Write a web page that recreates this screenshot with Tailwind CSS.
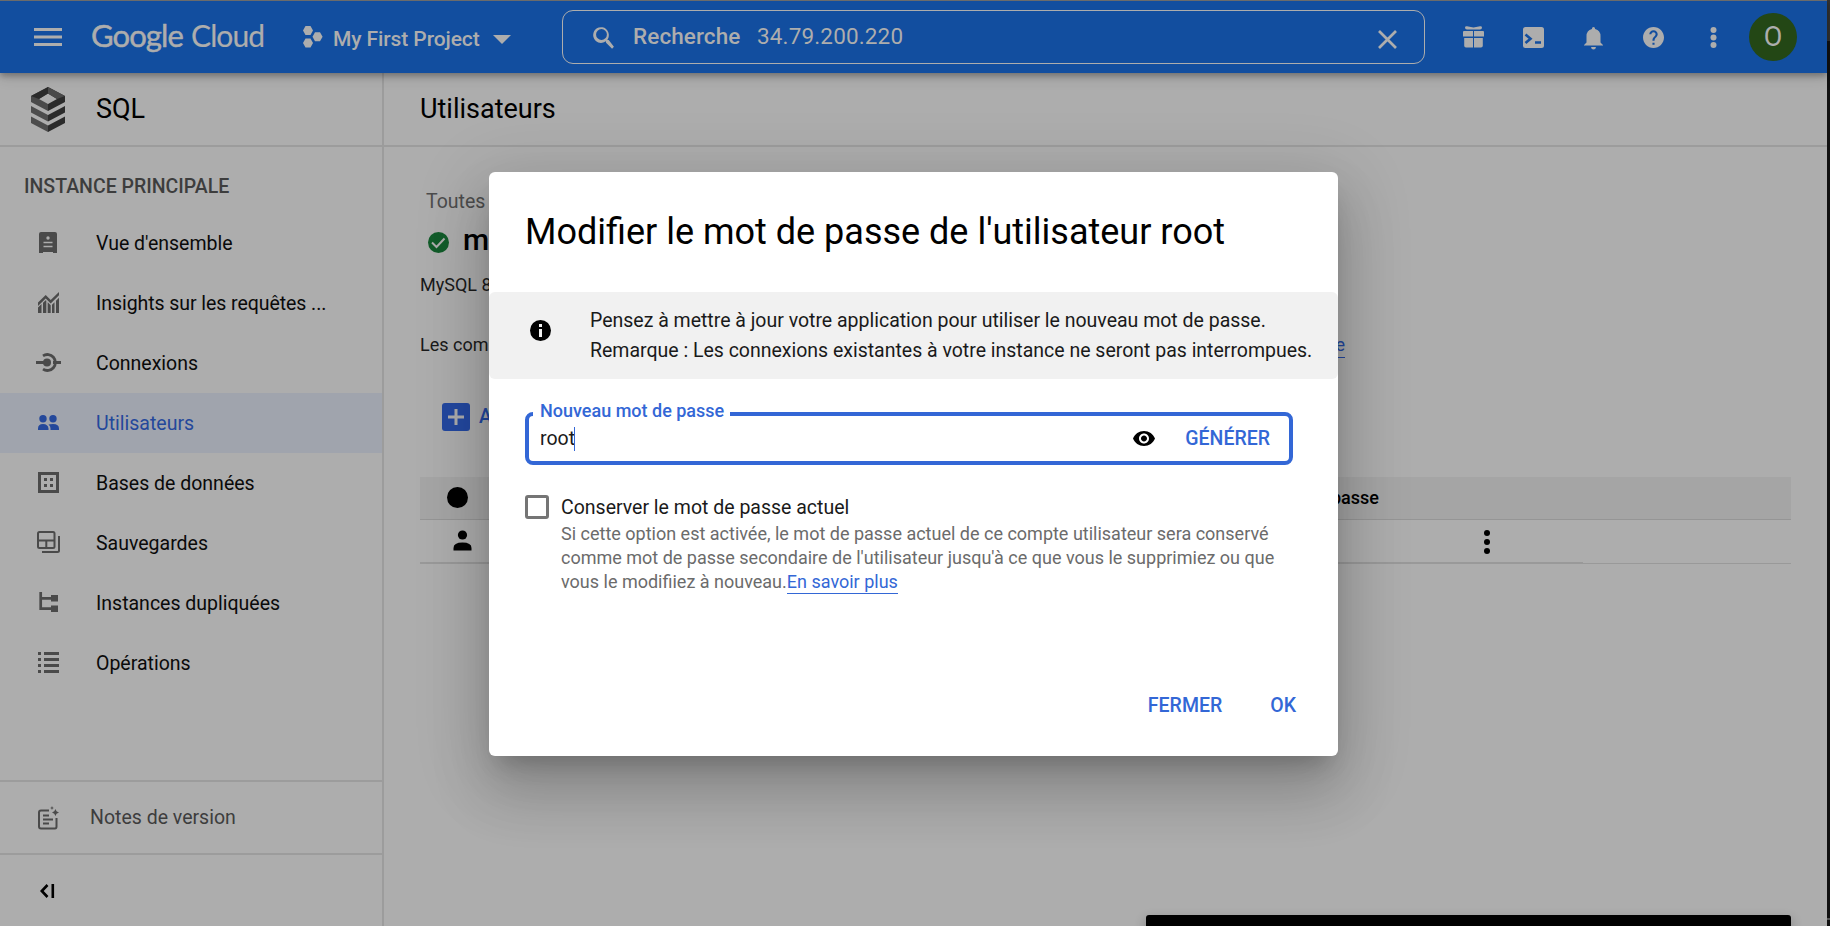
<!DOCTYPE html>
<html lang="fr">
<head>
<meta charset="utf-8">
<title>SQL – Utilisateurs</title>
<script src="https://cdn.jsdelivr.net/npm/@tailwindcss/browser@4"></script>
</head>
<body class="relative w-[1830px] h-[926px] overflow-hidden bg-[#adadad] font-[Roboto,sans-serif] text-black text-[19.5px]">
<div class="flex h-[926px] overflow-hidden">
 <div class="flex w-[1827px] flex-col">
  <header class="relative z-10 flex h-[73px] shrink-0 items-center border-t border-[#6b6b6b] bg-[#124e9f] text-[#adadad] shadow-[0_3px_6px_rgba(0,0,0,0.28),0_4px_14px_rgba(0,0,0,0.12)]">
   <svg class="ml-[34px] w-7 h-[18px] shrink-0" viewBox="0 0 28 18" fill="currentColor"><path d="M0 0h28v3H0zM0 7.5h28v3H0zM0 15h28v3H0z"/></svg>
   <div class="ml-[29px] mb-1 flex w-[175px] shrink-0 items-baseline gap-[6px] whitespace-nowrap font-[Lato,sans-serif] text-[31px] leading-[40px]"><span class="w-[94px] tracking-[-0.9px] [-webkit-text-stroke:0.5px_currentColor]">Google</span><span class="text-[30px] tracking-[-0.9px] [-webkit-text-stroke:0.2px_currentColor]">Cloud</span></div>
   <svg class="ml-[37px] w-5 h-[22px] shrink-0" viewBox="0 0 20 22" fill="currentColor"><path d="M2.5 0h5l2.500 4.500-2.500 4.500h-5L0 4.500zM2.500 12.500h5l2.500 4.500-2.500 4.500h-5L0 17zM12 6.300h5l2.600 4.500-2.600 4.500h-5l-2.500-4.500z"/></svg>
   <span class="ml-[10px] mt-[5px] w-[148px] shrink-0 whitespace-nowrap text-[21px] font-medium tracking-[-0.1px]">My First Project</span>
   <svg class="ml-[12px] mt-1 w-[18px] h-[9px] shrink-0" viewBox="0 0 18 9" fill="currentColor"><path d="M0 0h18L9 9z"/></svg>
   <div class="ml-[51px] flex h-[54px] w-[863px] shrink-0 items-center rounded-[11px] border border-[#adadad]">
    <svg class="ml-[27px] w-[29px] h-[29px]" viewBox="0 0 24 24" fill="currentColor"><path d="M15.500 14h-.79l-.28-.27A6.500 6.500 0 1 0 13 15.200l.27.28v.79l5 4.990L19.800 19.700zM9.500 14a4.500 4.500 0 1 1 0-9 4.500 4.500 0 0 1 0 9z"/></svg>
    <span class="ml-[14px] mb-[1px] w-[124px] whitespace-nowrap text-[22.500px] font-medium tracking-[0.1px]">Recherche</span>
    <span class="mb-[1px] whitespace-nowrap text-[22.500px] tracking-[0.15px]">34.79.200.220</span>
    <svg class="ml-auto mr-[27px] mt-1 w-[19px] h-[19px]" viewBox="0 0 19 19" fill="none" stroke="currentColor" stroke-width="2.700"><path d="M1 1l17 17M18 1L1 18"/></svg>
   </div>
   <div class="ml-[38px] flex items-center">
    <svg class="w-[21px] h-[22px]" viewBox="0 0 21 22" fill="currentColor"><path d="M2 1.500Q2 0 4 .2L10.500 1.500 17 .2Q19 0 19 1.500 19 3.500 17 3.500H4Q2 3.500 2 1.500zM1 5h9v5.500H0V6q0-1 1-1zm10 0h9q1 0 1 1v4.500H11zM1.200 12H10v9.500H3q-1.800 0-1.800-1.800zM11 12h8.800v7.700q0 1.800-1.800 1.800h-7z"/></svg>
    <svg class="ml-[39px] w-[21px] h-[21px]" viewBox="0 0 21 21"><rect width="21" height="21" rx="2.500" fill="#adadad"/><path d="M2.500 7.500l5 4.300-5 4.300M12 15.500h6" fill="none" stroke="#124e9f" stroke-width="2.600"/></svg>
    <svg class="ml-[40px] mt-0.5 w-[19px] h-[23px]" viewBox="0 0 19 23" fill="currentColor"><path d="M9.500 0q1.600 0 1.600 1.900Q16.500 3.300 16.500 9v6.500L19 18v.5H0V18l2.500-2.500V9Q2.500 3.300 7.900 1.900 7.900 0 9.500 0zM7 20h5q-.3 2.600-2.500 2.600T7 20z"/></svg>
    <svg class="ml-[40px] w-[21px] h-[21px]" viewBox="2 2 20 20" fill="currentColor"><path d="M12 2C6.480 2 2 6.480 2 12s4.480 10 10 10 10-4.480 10-10S17.520 2 12 2zm1 17h-2v-2h2v2zm2.070-7.750l-.9.920C13.450 12.900 13 13.500 13 15h-2v-.5c0-1.100.45-2.100 1.170-2.830l1.240-1.260c.37-.36.59-.86.59-1.410 0-1.100-.9-2-2-2s-2 .9-2 2H8c0-2.210 1.790-4 4-4s4 1.790 4 4c0 .88-.36 1.680-.93 2.250z"/></svg>
    <svg class="ml-[46px] w-[7px] h-[21px]" viewBox="0 0 7 21" fill="currentColor"><circle cx="3.500" cy="3" r="3"/><circle cx="3.500" cy="10.500" r="3"/><circle cx="3.500" cy="18" r="3"/></svg>
    <div class="ml-[32px] flex h-12 w-12 items-center justify-center rounded-full bg-[#234715] text-[27px]">O</div>
   </div>
  </header>

  <div class="flex min-h-0 grow">
   <aside class="flex w-[384px] shrink-0 flex-col border-r-2 border-[#9c9c9c]">
    <div class="flex h-[74px] shrink-0 items-center border-b-2 border-[#9c9c9c]">
     <svg class="ml-[31px] w-[34px] h-[45px]" viewBox="0 0 34 45"><path fill-rule="evenodd" d="M0 9L17 0v6.500L8 12l9 5v7L0 15z" fill="#4a4a4a"/><path d="M34 9L17 0v6.500L26 12l-9 5v7l17-9z" fill="#2b2b2b"/><path d="M17 0v6.500L8 12 0 9z" fill="#2b2b2b"/><path d="M17 0v6.500L26 12l8-3z" fill="#4a4a4a"/><path d="M0 19l17 9v6.500L0 25.500zM0 29.500l17 9V45L0 36z" fill="#4c4c4c"/><path d="M34 19l-17 9v6.500l17-9zM34 29.500l-17 9V45l17-9z" fill="#2b2b2b"/></svg>
     <span class="ml-[31px] text-[27px]">SQL</span>
    </div>
    <div class="mt-[26px] ml-[24px] h-[28px] leading-[28px] whitespace-nowrap font-medium text-[#3d3d3d]">INSTANCE PRINCIPALE</div>
    <nav class="mt-[12px] flex flex-col text-[#0a0a0a]">
     <a class="flex h-[60px] items-center pl-[35px]"><svg class="w-[26px] h-[26px] text-[#4a4a4a]" viewBox="0 0 26 26"><path d="M4 4q0-2 2-2h14q2 0 2 2v19h-4v-1H8v1H4z" fill="currentColor"/><circle cx="13" cy="8" r="1.700" fill="#adadad"/><path d="M8.500 12.500h9M8.500 16.500h9" stroke="#adadad" stroke-width="1.500"/></svg><span class="mt-[2px] ml-[35px] whitespace-nowrap">Vue d'ensemble</span></a>
     <a class="flex h-[60px] items-center pl-[35px]"><svg class="w-[26px] h-[26px] text-[#4a4a4a]" viewBox="0 0 26 26" fill="currentColor"><path d="M3 12.500L10.700 5l5 5L24 2v3.200l-8.300 8.300-5-5L3 16z"/><path d="M3 17.500l3.500-3.400V23H3zM8 12.700l2.700-2.500.6.600V23H8zM12.700 12.200l3 3V23h-3zM17 14.700l2.500-2.500V23H17zM21 10.700l3-3V23h-3z"/></svg><span class="mt-[2px] ml-[35px] whitespace-nowrap tracking-[-0.06px]">Insights sur les requêtes ...</span></a>
     <a class="flex h-[60px] items-center pl-[35px]"><svg class="w-[26px] h-[26px] text-[#4a4a4a]" viewBox="0 0 26 26" fill="none" stroke="currentColor"><circle cx="12" cy="12.500" r="4" fill="currentColor" stroke="none"/><path d="M1 12.500h10M18 12.500h8" stroke-width="2.800"/><path d="M8 5.800a8 8 0 1 1 0 13.400" stroke-width="2.800"/></svg><span class="mt-[2px] ml-[35px] whitespace-nowrap">Connexions</span></a>
     <a class="flex h-[60px] items-center bg-[#a0a4ad] pl-[35px] text-[#24489b]"><svg class="w-[26px] h-[26px]" viewBox="0 0 26 26" fill="currentColor"><circle cx="8" cy="8.700" r="3.700"/><circle cx="18" cy="8.700" r="3.700"/><path d="M3 20v-1.500Q3 14 8 14t5.500 4.500V20zM15.500 20v-1.500q0-2.500-2-3.900Q15 14 18 14q6 0 6 4.500V20z"/></svg><span class="mt-[2px] ml-[35px] whitespace-nowrap">Utilisateurs</span></a>
     <a class="flex h-[60px] items-center pl-[35px]"><svg class="w-[26px] h-[26px] text-[#4a4a4a]" viewBox="0 0 26 26"><path d="M4.500 3.500h18v18h-18z" fill="none" stroke="currentColor" stroke-width="3"/><path d="M9 8h3v3H9zM15 8h3v3h-3zM9 14h3v3H9zM15 14h3v3h-3z" fill="currentColor"/></svg><span class="mt-[2px] ml-[35px] whitespace-nowrap">Bases de données</span></a>
     <a class="flex h-[60px] items-center pl-[35px]"><svg class="w-[26px] h-[26px] text-[#4a4a4a]" viewBox="0 0 26 26" fill="none" stroke="currentColor" stroke-width="2"><rect x="3" y="2" width="16.500" height="16" rx="1.500"/><path d="M3 10.500h16M11.300 10.500V18M24 6v14.500q0 1.500-1.500 1.500H7"/></svg><span class="mt-[2px] ml-[35px] whitespace-nowrap">Sauvegardes</span></a>
     <a class="flex h-[60px] items-center pl-[35px]"><svg class="w-[26px] h-[26px] text-[#4a4a4a]" viewBox="0 0 26 26"><path d="M5.700 2v16.700H18M5.700 8.300H18" fill="none" stroke="currentColor" stroke-width="2.700"/><path d="M16 5h7v6.500h-7zM16 15.500h7v6.500h-7z" fill="currentColor"/></svg><span class="mt-[2px] ml-[35px] whitespace-nowrap">Instances dupliquées</span></a>
     <a class="flex h-[60px] items-center pl-[35px]"><svg class="w-[26px] h-[26px] text-[#4a4a4a]" viewBox="0 0 26 26" fill="currentColor"><path d="M3 2h3v3H3zM9 2h15v3H9zM3 8h3v3H3zM9 8h15v3H9zM3 14h3v3H3zM9 14h15v3H9zM3 20h3v3H3zM9 20h15v3H9z"/></svg><span class="mt-[2px] ml-[35px] whitespace-nowrap">Opérations</span></a>
    </nav>
    <div class="mt-auto flex h-[75px] shrink-0 items-center border-y-2 border-[#9c9c9c] pl-[37px] text-[#3d3d3d]">
     <svg class="w-[23px] h-[24px] text-[#4a4a4a]" viewBox="0 0 23 24" fill="none" stroke="currentColor" stroke-width="2"><path d="M12 4.500H4Q2 4.500 2 6.500v14q0 2 2 2h14q1.500 0 1.500-2V12"/><path d="M6 9.500h6M6 13.500h10M6 17.500h6"/><path d="M18.500 3l1 2.200 2.500 1.300-2.500 1.200-1 2.300-1.200-2.300L15 6.500l2.300-1.300zM15 0l.6 1.400 1.400.6-1.400.6L15 4l-.6-1.400L13 2l1.400-.6z" fill="currentColor" stroke="none"/></svg>
     <span class="ml-[30px] whitespace-nowrap">Notes de version</span>
    </div>
    <div class="flex h-[71px] shrink-0 items-center pl-[40px]"><svg class="w-[15px] h-[14px]" viewBox="0 0 15 14" fill="none" stroke="#000" stroke-width="2.600"><path d="M7.500 1L1.800 7l5.700 6M12.800 0v14"/></svg></div>
   </aside>

   <main class="flex min-w-0 grow flex-col">
    <div class="flex h-[74px] shrink-0 items-center border-b-2 border-[#9c9c9c] pl-[36px]"><span class="text-[27px]">Utilisateurs</span></div>
    <div class="mr-[36px] ml-[36px] flex flex-col whitespace-nowrap">
     <div class="mt-[40px] ml-[6px] h-[30px] leading-[30px] text-[#4c4c4c]">Toutes</div>
     <div class="mt-[5px] ml-[8px] flex h-[40px] items-center">
      <svg class="mt-[1px] w-[21px] h-[21px] shrink-0" viewBox="0 0 21 21"><circle cx="10.500" cy="10.500" r="10.500" fill="#125c2a"/><path d="M4 10.500l4.500 4.500 8-8.500" fill="none" stroke="#adadad" stroke-width="2"/></svg>
      <span class="mb-[5px] ml-[14px] text-[30px] font-medium">m</span>
     </div>
     <div class="mt-[11px] h-[24px] text-[18px] leading-[24px] text-[#1a1a1a]">MySQL 8</div>
     <div class="mt-[36px] flex h-[24px] justify-between pr-[446px] text-[18px] leading-[24px] text-[#1a1a1a]"><span>Les com</span><span class="h-[25px] border-b border-[#2348a0] text-[#2348a0]">e</span></div>
     <div class="mt-[46px] ml-[22px] flex h-[28px] items-center font-medium text-[#2348a0]">
      <svg class="w-[28px] h-[28px] shrink-0" viewBox="0 0 28 28"><rect width="28" height="28" rx="3" fill="#2348a0"/><path d="M14 6v16M6 14h16" stroke="#adadad" stroke-width="3"/></svg>
      <span class="ml-[9px]">A</span>
     </div>
     <div class="mt-[46px] flex h-[43px] items-center justify-between border-b border-[#959595] bg-[#a5a5a5] pr-[412px] pl-[27px]">
      <svg class="mb-[1px] w-[21px] h-[21px]" viewBox="0 0 21 21"><circle cx="10.500" cy="10.500" r="10.500"/></svg>
      <span class="mb-[1px] text-[18px] font-medium">passe</span>
     </div>
     <div class="flex h-[44px] items-center justify-between border-b border-[#999999] pr-[301px] pl-[33px]">
      <svg class="mb-[2px] w-[20px] h-[21px]" viewBox="0 0 20 21"><circle cx="9.500" cy="5" r="4.600"/><path d="M.5 20.500v-2.500q0-5.500 9-5.500t9 5.500v2.500z"/></svg>
      <svg class="w-[6px] h-[24px]" viewBox="0 0 6 24"><circle cx="3" cy="3" r="3"/><circle cx="3" cy="12" r="3"/><circle cx="3" cy="21" r="3"/></svg>
     </div>
     <div class="mt-[-2px] h-px w-[1163px] bg-[#999]"></div>
    </div>
   </main>
  </div>
 </div>
 <div class="flex w-[3px] flex-col bg-[#111]"><div class="h-[41px] bg-[#333]"></div><div class="mt-auto mb-[6px] h-[2px] bg-[#555]"></div></div>
</div>

<div class="absolute bottom-0 left-[1146px] z-20 h-[11px] w-[645px] rounded-t-[3px] bg-black shadow-[0_5px_12px_rgba(0,0,0,0.3)]"></div>

<section role="dialog" class="absolute top-[172px] left-[489px] z-20 flex h-[584px] w-[849px] flex-col rounded-[6px] bg-white whitespace-nowrap text-[#1a1a1a] shadow-[0_16px_22px_-10px_rgba(0,0,0,0.2),0_36px_57px_4px_rgba(0,0,0,0.14),0_14px_69px_12px_rgba(0,0,0,0.12)]">
 <h2 class="flex h-[120px] shrink-0 items-center pl-[36px] text-[36px] text-black">Modifier le mot de passe de l'utilisateur root</h2>
 <div class="flex h-[87px] shrink-0 items-center rounded-[6px] bg-[#f1f1f1] pl-[41px]">
  <svg class="mb-[10px] w-[21px] h-[21px]" viewBox="0 0 21 21"><circle cx="10.500" cy="10.500" r="10.500"/><path d="M9 4h3v3H9zM9 9h3v8H9z" fill="#f1f1f1"/></svg>
  <p class="ml-[39px] leading-[30px] tracking-[-0.01px]">Pensez à mettre à jour votre application pour utiliser le nouveau mot de passe.<br>Remarque : Les connexions existantes à votre instance ne seront pas interrompues.</p>
 </div>
 <div class="relative mt-[33px] ml-[36px] flex h-[53px] w-[768px] shrink-0 items-center rounded-[8px] border-4 border-[#3367d6] pl-[11px]">
  <span class="absolute -top-[17px] left-[4px] w-[197px] bg-white pl-[7px] text-[18px] leading-[24px] font-medium text-[#3367d6]">Nouveau mot de passe</span>
  <span>root</span><span class="-ml-px h-[24px] w-px bg-[#3367d6]"></span>
  <svg class="ml-auto w-[22px] h-[15px]" viewBox="1 4.500 22 15"><path d="M12 4.500C7 4.500 2.730 7.610 1 12c1.730 4.390 6 7.500 11 7.500s9.270-3.110 11-7.500c-1.730-4.390-6-7.500-11-7.500zM12 17c-2.760 0-5-2.240-5-5s2.240-5 5-5 5 2.240 5 5-2.240 5-5 5zm0-8c-1.660 0-3 1.340-3 3s1.340 3 3 3 3-1.340 3-3-1.340-3-3-3z"/></svg>
  <span class="mr-[19px] ml-[30px] font-medium text-[#3367d6]">GÉNÉRER</span>
 </div>
 <div class="mt-[30px] ml-[36px] flex items-start">
  <div class="h-[24px] w-[24px] rounded-[3px] border-3 border-[#757575]"></div>
  <div class="ml-[12px]">
   <div class="h-[26px] leading-[25px]">Conserver le mot de passe actuel</div>
   <p class="mt-[1px] text-[18px] leading-[24px] text-[#6b6b6b]">Si cette option est activée, le mot de passe actuel de ce compte utilisateur sera conservé<br>comme mot de passe secondaire de l'utilisateur jusqu'à ce que vous le supprimiez ou que<br>vous le modifiiez à nouveau.<a class="border-b border-[#3367d6] pb-[1px] text-[#3367d6]">En savoir plus</a></p>
  </div>
 </div>
 <div class="mt-auto mb-[35px] flex h-[30px] justify-end gap-[48px] pr-[42px] leading-[30px] font-medium text-[#3367d6]"><span>FERMER</span><span>OK</span></div>
</section>
</body>
</html>
